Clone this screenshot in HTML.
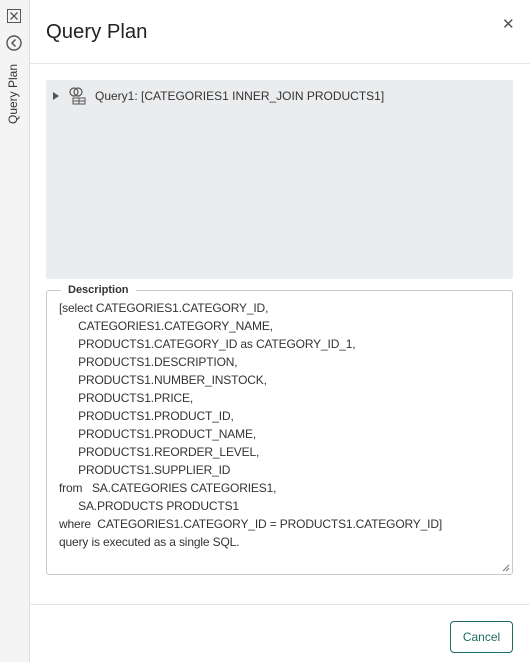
<!DOCTYPE html>
<html><head><style>
body{margin:0;width:530px;height:662px;font-family:"Liberation Sans",sans-serif;background:#fff;position:relative;overflow:hidden;color:#333}
.side{position:absolute;left:0;top:0;width:29px;height:662px;background:#f4f4f4;border-right:1px solid #dcdcdc}
.title{position:absolute;left:46px;top:21px;font-size:20.3px;color:#222}
.x{position:absolute;left:502px;top:15px;font-size:15px;color:#555}
.hr{position:absolute;left:30px;right:0;height:1px;background:#e6e6e6}
.tree{position:absolute;left:46px;top:80px;width:467px;height:199px;background:#ebecee;border-radius:2px}
fieldset{position:absolute;left:46px;top:284px;margin:0;padding:0;border:1px solid #c8c8c8;border-radius:3px;box-sizing:border-box;width:467px;height:291px}
legend{font-size:11px;font-weight:bold;margin-left:14px;padding:0 7px;color:#333}
.d{position:absolute;left:12px;top:3px;font-size:12px;letter-spacing:-0.15px;line-height:18px;color:#333;white-space:pre}
.btn{position:absolute;left:450px;top:621px;width:61px;height:30px;border:1px solid #1f6b63;border-radius:4px;color:#1f6b63;font-size:12px;text-align:center;line-height:30px}
</style></head><body>
<div class="side">
<svg style="position:absolute;left:7px;top:9px" width="14" height="14"><rect x="0.5" y="0.5" width="13" height="13" fill="none" stroke="#555"/><path d="M3.5 3.5L10.5 10.5M10.5 3.5L3.5 10.5" stroke="#555" stroke-width="1.3"/></svg>
<svg style="position:absolute;left:6px;top:35px" width="16" height="16"><circle cx="8" cy="8" r="7" fill="none" stroke="#555" stroke-width="1.4"/><path d="M9.5 4.5L6 8L9.5 11.5" fill="none" stroke="#555" stroke-width="1.5"/></svg>
<div style="position:absolute;left:6px;top:124px;transform:rotate(-90deg);transform-origin:0 0;font-size:12px;color:#333;white-space:nowrap">Query Plan</div>
</div>
<div class="title">Query Plan</div>
<div class="x">✕</div>
<div class="hr" style="top:63px"></div>
<div class="tree">
<svg style="position:absolute;left:6px;top:11px" width="8" height="10"><path d="M1 1L7 5L1 9Z" fill="#555"/></svg>
<svg style="position:absolute;left:22px;top:7px" width="18" height="18"><circle cx="6" cy="5" r="4" fill="none" stroke="#555" stroke-width="1.2"/><circle cx="10" cy="5" r="4" fill="none" stroke="#555" stroke-width="1.2"/><rect x="5" y="11" width="12" height="6" fill="none" stroke="#555"/><path d="M11 11V17M5 14H17" stroke="#555"/></svg>
<div style="position:absolute;left:49px;top:9px;font-size:12px;color:#333">Query1: [CATEGORIES1 INNER_JOIN PRODUCTS1]</div>
</div>
<fieldset><legend>Description</legend>
<div class="d">[select CATEGORIES1.CATEGORY_ID,
      CATEGORIES1.CATEGORY_NAME,
      PRODUCTS1.CATEGORY_ID as CATEGORY_ID_1,
      PRODUCTS1.DESCRIPTION,
      PRODUCTS1.NUMBER_INSTOCK,
      PRODUCTS1.PRICE,
      PRODUCTS1.PRODUCT_ID,
      PRODUCTS1.PRODUCT_NAME,
      PRODUCTS1.REORDER_LEVEL,
      PRODUCTS1.SUPPLIER_ID
from   SA.CATEGORIES CATEGORIES1,
      SA.PRODUCTS PRODUCTS1
where  CATEGORIES1.CATEGORY_ID = PRODUCTS1.CATEGORY_ID]
query is executed as a single SQL.</div>
<svg style="position:absolute;right:2px;bottom:2px" width="8" height="8"><path d="M7 1L1 7M7 4L4 7" stroke="#777"/></svg>
</fieldset>
<div class="hr" style="top:604px"></div>
<div class="btn">Cancel</div>
</body></html>
